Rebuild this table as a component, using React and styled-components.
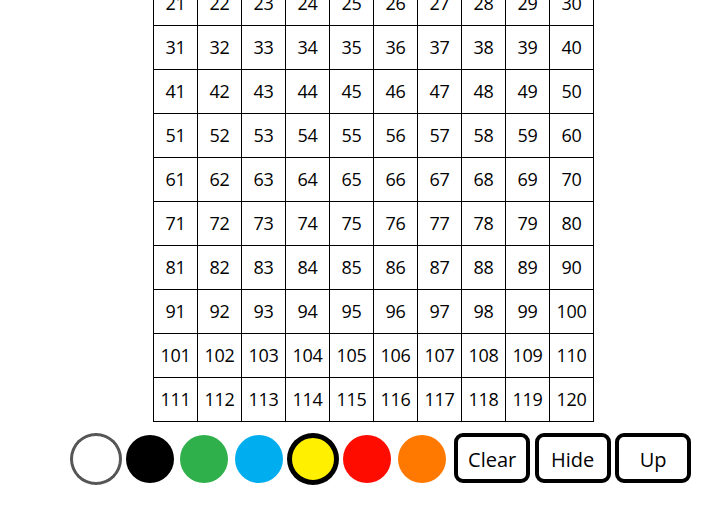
import React from "react";
import styled, { createGlobalStyle } from "styled-components";

const Global = createGlobalStyle`
  html, body { margin: 0; padding: 0; background: #fff; }
  body { font-family: "Open Sans", "Noto Sans", sans-serif; color: #000; }
`;

const Page = styled.div`
  height: 100vh;
  box-sizing: border-box;
  overflow: hidden;
  display: flex;
  flex-direction: column;
  justify-content: flex-end;
  align-items: center;
  padding-bottom: 34px;
`;

const Board = styled.div`
  display: grid;
  grid-template-columns: repeat(10, 44px);
  grid-auto-rows: 44px;
  border-left: 1px solid #000;
  border-top: 1px solid #000;
  margin-left: 32px;
  margin-bottom: 11px;
  flex-shrink: 0;
`;

const Cell = styled.div`
  box-sizing: border-box;
  border-right: 1px solid #000;
  border-bottom: 1px solid #000;
  display: flex;
  align-items: center;
  justify-content: center;
  font-size: 18px;
  padding-bottom: 1px;
  letter-spacing: -0.3px;
`;

const Controls = styled.div`
  display: flex;
  align-items: center;
  height: 50px;
  margin-left: 48px;
  flex-shrink: 0;
`;

const Swatches = styled.div`
  display: flex;
  align-items: center;
  gap: 6.3px;
  margin-right: 8.5px;
`;

const Swatch = styled.button`
  box-sizing: border-box;
  width: 48px;
  height: 48px;
  padding: 0;
  border-radius: 50%;
  background: ${(p) => p.$color};
  border: ${(p) => (p.$ring ? `${p.$inner}px solid ${p.$ring}` : "none")};
  box-shadow: ${(p) => (p.$ring ? `0 0 0 2px ${p.$ring}` : "none")};
  margin-top: 2px;
  cursor: pointer;
`;

const Buttons = styled.div`
  display: flex;
  gap: 4.5px;
`;

const ActionButton = styled.button`
  box-sizing: border-box;
  width: 76px;
  height: 50px;
  border: 4px solid #000;
  border-radius: 9px;
  background: #fff;
  font-family: "Open Sans", "Noto Sans", sans-serif;
  font-size: 20px;
  color: #000;
  padding: 2px 0 0;
  cursor: pointer;
`;

const colors = [
  { c: "#ffffff", ring: "#555555", inner: 1 },
  { c: "#000000" },
  { c: "#2fb04a" },
  { c: "#00aeef" },
  { c: "#fff000", ring: "#000000", inner: 3 },
  { c: "#ff0c00" },
  { c: "#ff7900" },
];

export default function App() {
  const nums = Array.from({ length: 120 }, (_, i) => i + 1);
  return (
    <>
      <Global />
      <Page>
        <Board>
          {nums.map((n) => (
            <Cell key={n}>{n}</Cell>
          ))}
        </Board>
        <Controls>
          <Swatches>
            {colors.map((s, i) => (
              <Swatch key={i} $color={s.c} $ring={s.ring} $inner={s.inner} />
            ))}
          </Swatches>
          <Buttons>
            <ActionButton>Clear</ActionButton>
            <ActionButton>Hide</ActionButton>
            <ActionButton>Up</ActionButton>
          </Buttons>
        </Controls>
      </Page>
    </>
  );
}
